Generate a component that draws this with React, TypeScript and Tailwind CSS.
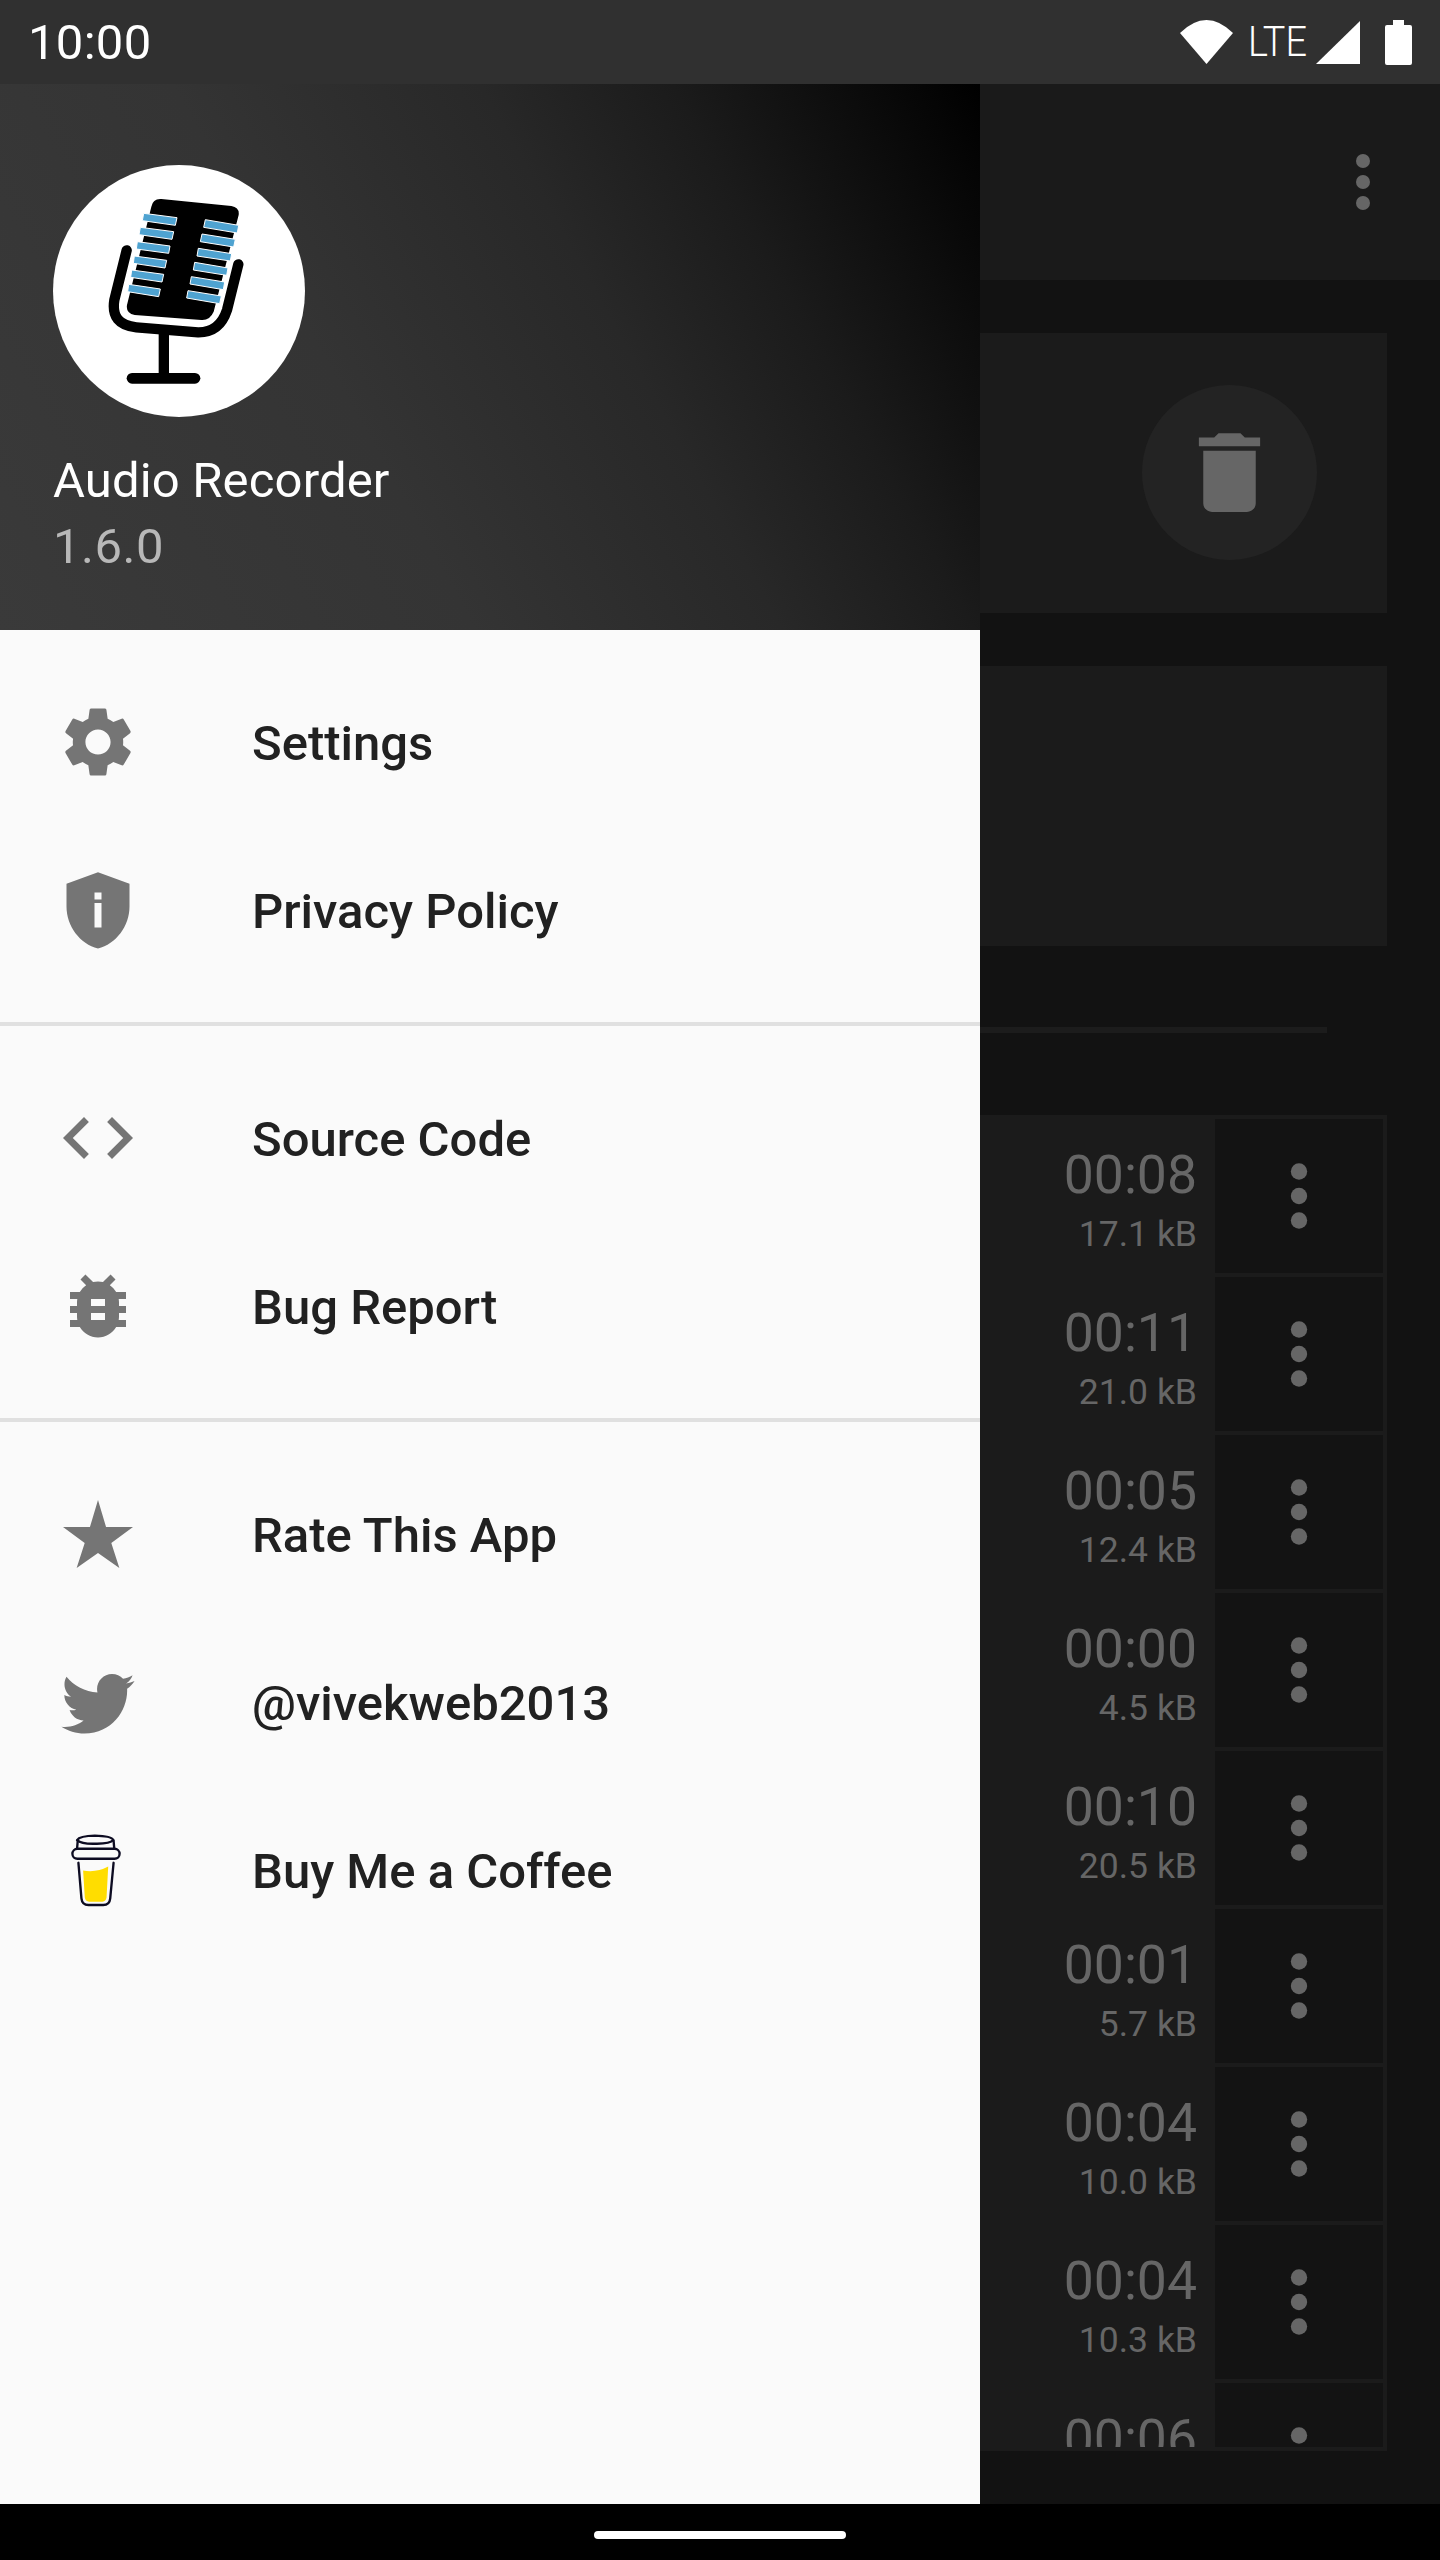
import React from "react";

const MORE = (
  <>
    <circle cx="12" cy="6" r="2" />
    <circle cx="12" cy="12" r="2" />
    <circle cx="12" cy="18" r="2" />
  </>
);

function Icon({ d }: { d: string }) {
  return (
    <svg viewBox="0 0 24 24" className="w-[84px] h-[84px] fill-[#757575] shrink-0">
      <path d={d} />
    </svg>
  );
}

const leftBars = [
  "312,190 412,203 407,226 308,212",
  "302,232 402,245 397,268 298,254",
  "293,275 391,288 387,310 290,297",
  "284,318 381,331 376,354 281,340",
  "276,360 372,373 367,396 273,382",
  "267,403 362,417 357,440 264,425",
  "497,209 597,226 593,249 492,232",
  "487,252 587,268 582,291 482,275",
  "476,295 576,311 572,333 472,318",
  "465,337 565,354 561,376 461,360",
  "455,380 555,396 551,419 451,402",
  "445,422 545,438 540,461 441,444",
];

function Logo() {
  return (
    <div className="w-[252px] h-[252px] rounded-full bg-white overflow-hidden">
      <svg viewBox="40 45 756 756" className="w-[252px] h-[252px]">
        <path d="M365 147 L575 168 Q600 172 597 195 L522 485 Q510 512 485 510 L285 495 Q258 490 262 465 L335 170 Q340 145 365 147 Z" fill="#000" />
        {leftBars.map((p) => (
          <polygon key={p} points={p} fill="#4fa3d1" stroke="#fff" strokeWidth="3" />
        ))}
        <path d="M261 301 L224 450 Q212 525 290 532 L475 547 Q540 548 562 480 L596 343" fill="none" stroke="#000" strokeWidth="31" strokeLinecap="round" />
        <rect x="357" y="545" width="31" height="130" fill="#000" />
        <rect x="261" y="669" width="221" height="32" rx="16" fill="#000" />
      </svg>
    </div>
  );
}

function Coffee() {
  return (
    <svg viewBox="205 1170 170 230" className="w-[57px] h-[77px] shrink-0">
      <path d="M250 1285 Q290 1292 325 1273 L320 1366 Q318 1378 308 1378 L268 1378 Q257 1378 255 1366 Z" fill="#ffdd00" />
      <g fill="none" stroke="#0d0c22" strokeWidth="7" strokeLinecap="round">
        <path d="M232 1194 Q240 1182 285 1181 Q335 1182 340 1194 Q330 1206 285 1205 Q245 1206 232 1194" />
        <path d="M234 1196 L232 1219 M341 1196 L343 1219" />
        <rect x="218" y="1220" width="141" height="30" rx="15" />
        <path d="M236 1262 L245 1368 Q247 1388 266 1388 L310 1388 Q329 1388 331 1368 L341 1262" />
      </g>
    </svg>
  );
}

const menuGroups: { label: string; icon: React.ReactNode }[][] = [
  [
    {
      label: "Settings",
      icon: <Icon d="M19.14,12.94c0.04-0.3,0.06-0.61,0.06-0.94c0-0.32-0.02-0.64-0.07-0.94l2.03-1.58c0.18-0.14,0.23-0.41,0.12-0.61l-1.92-3.32c-0.12-0.22-0.37-0.29-0.59-0.22l-2.39,0.96c-0.5-0.38-1.03-0.7-1.62-0.94L14.4,2.81c-0.04-0.24-0.24-0.41-0.48-0.41h-3.84c-0.24,0-0.43,0.17-0.47,0.41L9.25,5.35C8.66,5.59,8.12,5.92,7.63,6.29L5.24,5.33c-0.22-0.08-0.47,0-0.59,0.22L2.74,8.87C2.62,9.08,2.66,9.34,2.86,9.48l2.03,1.58C4.84,11.36,4.8,11.69,4.8,12s0.02,0.64,0.07,0.94l-2.03,1.58c-0.18,0.14-0.23,0.41-0.12,0.61l1.92,3.32c0.12,0.22,0.37,0.29,0.59,0.22l2.39-0.96c0.5,0.38,1.03,0.7,1.62,0.94l0.36,2.54c0.05,0.24,0.24,0.41,0.48,0.41h3.84c0.24,0,0.44-0.17,0.47-0.41l0.36-2.54c0.59-0.24,1.13-0.56,1.62-0.94l2.39,0.96c0.22,0.08,0.47,0,0.59-0.22l1.92-3.32c0.12-0.22,0.07-0.47-0.12-0.61L19.14,12.94z M12,15.6c-1.98,0-3.6-1.62-3.6-3.6s1.62-3.6,3.6-3.6s3.6,1.62,3.6,3.6S13.98,15.6,12,15.6z" />,
    },
    {
      label: "Privacy Policy",
      icon: (
        <svg viewBox="0 0 24 24" className="w-[84px] h-[84px] fill-[#757575] shrink-0">
          <path fillRule="evenodd" d="M12 1.2L3 4.5V11c0 5.55 3.84 10.74 9 12 5.16-1.26 9-6.45 9-12V4.5zM11 7h2v2h-2zM11 10h2v7h-2z" />
        </svg>
      ),
    },
  ],
  [
    { label: "Source Code", icon: <Icon d="M9.4 16.6L4.8 12l4.6-4.6L8 6l-6 6 6 6 1.4-1.4zm5.2 0l4.6-4.6-4.6-4.6L16 6l6 6-6 6-1.4-1.4z" /> },
    { label: "Bug Report", icon: <Icon d="M20 8h-2.81c-.45-.78-1.07-1.45-1.82-1.96L17 4.41 15.59 3l-2.17 2.17C12.96 5.06 12.49 5 12 5c-.49 0-.96.06-1.41.17L8.41 3 7 4.41l1.62 1.63C7.88 6.55 7.26 7.22 6.81 8H4v2h2.09c-.05.33-.09.66-.09 1v1H4v2h2v1c0 .34.04.67.09 1H4v2h2.81c1.04 1.79 2.97 3 5.19 3s4.15-1.21 5.19-3H20v-2h-2.09c.05-.33.09-.66.09-1v-1h2v-2h-2v-1c0-.34-.04-.67-.09-1H20V8zm-6 8h-4v-2h4v2zm0-4h-4v-2h4v2z" /> },
  ],
  [
    { label: "Rate This App", icon: <Icon d="M12 2.3L14.3 10H22L15.8 14.6L18.1 21.7L12 17.4L5.9 21.7L8.2 14.6L2 10H9.7Z" /> },
    { label: "@vivekweb2013", icon: <Icon d="M22.46,6C21.69,6.35 20.86,6.58 20,6.71C20.88,6.18 21.56,5.34 21.88,4.33C21.05,4.83 20.13,5.19 19.16,5.39C18.37,4.53 17.26,4 16,4C13.65,4 11.73,5.92 11.73,8.29C11.73,8.63 11.77,8.96 11.84,9.27C8.28,9.09 5.11,7.38 3,4.79C2.63,5.42 2.42,6.16 2.42,6.94C2.42,8.43 3.17,9.75 4.33,10.5C3.62,10.5 2.96,10.3 2.38,10C2.38,10 2.38,10 2.38,10.03C2.38,12.11 3.86,13.85 5.82,14.24C5.46,14.34 5.08,14.39 4.69,14.39C4.42,14.39 4.15,14.36 3.89,14.31C4.43,16 6,17.26 7.89,17.29C6.43,18.45 4.58,19.13 2.56,19.13C2.22,19.13 1.88,19.11 1.54,19.07C3.44,20.29 5.7,21 8.12,21C16,21 20.33,14.46 20.33,8.79C20.33,8.6 20.33,8.42 20.32,8.23C21.16,7.63 21.88,6.87 22.46,6Z" /> },
    { label: "Buy Me a Coffee", icon: <div className="w-[84px] flex justify-center pr-[4px]"><Coffee /></div> },
  ],
];

const rows = [
  ["00:08", "17.1 kB"],
  ["00:11", "21.0 kB"],
  ["00:05", "12.4 kB"],
  ["00:00", "4.5 kB"],
  ["00:10", "20.5 kB"],
  ["00:01", "5.7 kB"],
  ["00:04", "10.0 kB"],
  ["00:04", "10.3 kB"],
  ["00:06", ""],
];

export default function App() {
  return (
    <div className="w-[1440px] h-[2560px] flex flex-col bg-black overflow-hidden font-['Roboto',sans-serif]">
      {/* Status bar */}
      <div className="h-[84px] shrink-0 bg-[#303030] flex items-center pl-[28px] pr-[28px] text-white">
        <span className="text-[49px] leading-[57px] mt-[1px] tracking-[0.3px]">10:00</span>
        <div className="ml-auto flex items-center">
          <svg viewBox="0 0 53 44" className="w-[53px] h-[44px] fill-white">
            <path d="M26.5 44L0 13Q26.5-13 53 13Z" />
          </svg>
          <span className="w-[59px] ml-[15px] text-[42px] leading-[44px] font-light origin-left scale-x-[0.9] whitespace-nowrap">LTE</span>
          <svg viewBox="0 0 44 43" className="w-[44px] h-[43px] ml-[9px] fill-white">
            <path d="M44 0V43H0Z" />
          </svg>
          <svg viewBox="0 0 27 45" className="w-[27px] h-[45px] ml-[25px] fill-white">
            <path d="M8 0h11v5h6a2 2 0 0 1 2 2v36a2 2 0 0 1-2 2H2a2 2 0 0 1-2-2V7a2 2 0 0 1 2-2h6z" />
          </svg>
        </div>
      </div>

      <div className="flex-1 flex min-h-0">
        {/* Drawer */}
        <div className="w-[980px] shrink-0 flex flex-col bg-[#fafafa]">
          <div className="h-[546px] shrink-0 pl-[53px] pt-[81px] bg-[linear-gradient(61deg,#3a3a3a_0%,#343434_37%,#282828_61%,#1b1b1b_76%,#000000_100%)]">
            <Logo />
            <div className="mt-[35px] text-[49px] leading-[57px] tracking-[0.15px] text-white">Audio Recorder</div>
            <div className="mt-[9px] text-[49px] leading-[57px] tracking-[0.5px] text-[#b8b8b8]">1.6.0</div>
          </div>
          {menuGroups.map((group, i) => (
            <div key={i} className={i < 2 ? "py-[28px] border-b-[4px] border-[#e0e0e0]" : "py-[28px]"}>
              {group.map((item) => (
                <div key={item.label} className="h-[168px] pl-[56px] flex items-center">
                  {item.icon}
                  <span className="ml-[112px] mt-[3px] text-[49px] leading-[57px] font-medium text-[#212121]">{item.label}</span>
                </div>
              ))}
            </div>
          ))}
        </div>

        {/* Dimmed main content */}
        <div className="flex-1 flex flex-col bg-[#121212]">
          <div className="h-[196px] shrink-0 bg-[#1a1a1a] flex items-center justify-end pr-[35px]">
            <svg viewBox="0 0 24 24" className="w-[84px] h-[84px] fill-[#666666]">{MORE}</svg>
          </div>
          <div className="flex-1 min-h-0 flex flex-col pr-[53px] pt-[53px]">
            <div className="h-[280px] shrink-0 bg-[#1b1b1b] flex items-center justify-end pr-[70px] pb-[2px]">
              <div className="w-[175px] h-[175px] rounded-full bg-[#232323] flex items-center justify-center">
                <svg viewBox="0 0 24 24" className="w-[105px] h-[105px] fill-[#666666]">
                  <path d="M6 19c0 1.1.9 2 2 2h8c1.1 0 2-.9 2-2V7H6v12zM19 4h-3.5l-1-1h-5l-1 1H5v2h14V4z" />
                </svg>
              </div>
            </div>
            <div className="h-[280px] shrink-0 mt-[53px] bg-[#1b1b1b]" />
            <div className="h-[6px] w-[347px] shrink-0 mt-[81px] bg-[#1c1c1c]" />
            <div className="h-[1336px] shrink-0 mt-[82px] bg-[#1b1b1b] pt-[4px] pr-[4px] pb-[4px]">
              <div className="h-full overflow-hidden flex flex-col gap-[4px]">
                {rows.map(([t, s], i) => (
                  <div key={i} className="h-[154px] shrink-0 flex">
                    <div className="w-[235px] pr-[18px] pt-[25px] flex flex-col items-end text-[#666666]">
                      <span className="text-[53.5px] leading-[62px]">{t}</span>
                      <span className="mt-[7px] text-[35.5px] leading-[42px]">{s}</span>
                    </div>
                    <div className="w-[168px] bg-[#131313] flex items-center justify-center">
                      <svg viewBox="0 0 24 24" className="w-[98px] h-[98px] fill-[#666666]">{MORE}</svg>
                    </div>
                  </div>
                ))}
              </div>
            </div>
          </div>
        </div>
      </div>

      {/* Navigation bar */}
      <div className="h-[56px] shrink-0 bg-black flex justify-center pt-[27px]">
        <div className="w-[252px] h-[8px] rounded-full bg-white" />
      </div>
    </div>
  );
}
